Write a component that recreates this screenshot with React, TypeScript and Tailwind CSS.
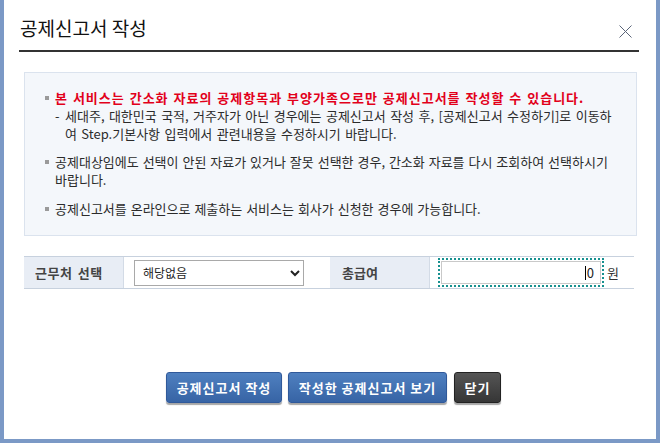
import React from 'react';

const font = { fontFamily: '"Noto Sans CJK KR", "Noto Sans", sans-serif' };

const Bullet = () => <span className="mt-[7px] mr-[6px] h-[4px] w-[4px] shrink-0 bg-[#9a9a9a]" />;

const App = () => {
  return (
    <div
      className="flex h-[443px] w-[660px] flex-col border-x-4 border-b-4 border-[#7b99c6] bg-white text-[#2b2b2b]"
      style={font}
    >
      {/* header */}
      <div className="ml-[15px] mr-[17px] flex h-[52px] items-start justify-between border-b-2 border-[#333] pt-[18px]">
        <h1 className="pl-[1px] text-[19px] leading-[20px] font-normal text-[#111]">공제신고서 작성</h1>
        <button className="mt-[7px] mr-[7px]" aria-label="닫기">
          <svg width="13" height="13" viewBox="0 0 13 13" className="block">
            <path d="M0.5 0.5 L12.5 12.5 M12.5 0.5 L0.5 12.5" stroke="#5a6478" strokeWidth="1" fill="none" />
          </svg>
        </button>
      </div>

      {/* notice */}
      <div className="mt-[20px] ml-[20px] w-[613px] border border-[#dbe3ee] bg-[#f4f7fb] pt-[16px] pb-[17px] pl-[20px] text-[13px] leading-[18px]">
        <div className="flex">
          <Bullet />
          <div>
            <p className="font-bold tracking-[1px] text-[#e2001a] [word-spacing:1px]">
              본 서비스는 간소화 자료의 공제항목과 부양가족으로만 공제신고서를 작성할 수 있습니다.
            </p>
            <div className="flex [word-spacing:1.5px]">
              <span className="w-[10px] shrink-0">-</span>
              <p className="whitespace-nowrap">
                세대주, 대한민국 국적, 거주자가 아닌 경우에는 공제신고서 작성 후, [공제신고서 수정하기]로 이동하
                <br />
                여 Step.기본사항 입력에서 관련내용을 수정하시기 바랍니다.
              </p>
            </div>
          </div>
        </div>
        <div className="mt-[10px] flex [word-spacing:1px]">
          <Bullet />
          <p className="whitespace-nowrap">
            공제대상임에도 선택이 안된 자료가 있거나 잘못 선택한 경우, 간소화 자료를 다시 조회하여 선택하시기
            <br />
            바랍니다.
          </p>
        </div>
        <div className="mt-[11px] flex [word-spacing:1px]">
          <Bullet />
          <p className="whitespace-nowrap">공제신고서를 온라인으로 제출하는 서비스는 회사가 신청한 경우에 가능합니다.</p>
        </div>
      </div>

      {/* form row */}
      <div className="mt-[20px] ml-[20px] flex h-[33px] w-[610px] border-y border-[#c7d1de] text-[12px]">
        <div className="flex w-[100px] items-center border-r border-[#d3dbe6] bg-[#e8edf5] pl-[11px] text-[13px] font-bold tracking-[0.5px] text-[#444] [word-spacing:2px]">
          근무처 선택
        </div>
        <div className="flex w-[206px] items-center pl-[10px]">
          <select className="h-[26px] w-[170px] border border-[#a9a9a9] bg-white pl-[4px] text-[12px] text-[#222]">
            <option>해당없음</option>
          </select>
        </div>
        <div className="flex w-[100px] items-center border-r border-[#d3dbe6] bg-[#e8edf5] pl-[12px] text-[13px] font-bold text-[#444]">
          총급여
        </div>
        <div className="flex flex-1 items-center pl-[8px]">
          <div className="border-2 border-dotted border-[#16908f] p-px">
            <div className="flex h-[23px] w-[160px] items-center justify-end border border-[#c9c9c9] bg-white pr-[6px] text-[13px] text-[#222]">
              <span className="mr-px h-[14px] w-px bg-black" />
              0
            </div>
          </div>
          <span className="ml-[3px] text-[13px] text-[#333]">원</span>
        </div>
      </div>

      {/* buttons */}
      <div className="mt-[83px] flex justify-center gap-[6px] pl-[7px] text-[13px] font-bold tracking-[1px] text-white">
        <button className="h-[31px] w-[116px] rounded-[3px] border border-[#30599a] bg-gradient-to-b from-[#4f80c0] to-[#3764a5] shadow-[0_2px_1px_rgba(0,0,0,0.35)]">
          공제신고서 작성
        </button>
        <button className="h-[31px] w-[159px] rounded-[3px] border border-[#30599a] bg-gradient-to-b from-[#4f80c0] to-[#3764a5] shadow-[0_2px_1px_rgba(0,0,0,0.35)]">
          작성한 공제신고서 보기
        </button>
        <button className="ml-px h-[31px] w-[47px] rounded-[3px] border border-[#222] bg-gradient-to-b from-[#555] to-[#363636] shadow-[0_2px_1px_rgba(0,0,0,0.35)]">
          닫기
        </button>
      </div>
    </div>
  );
};

export default App;
